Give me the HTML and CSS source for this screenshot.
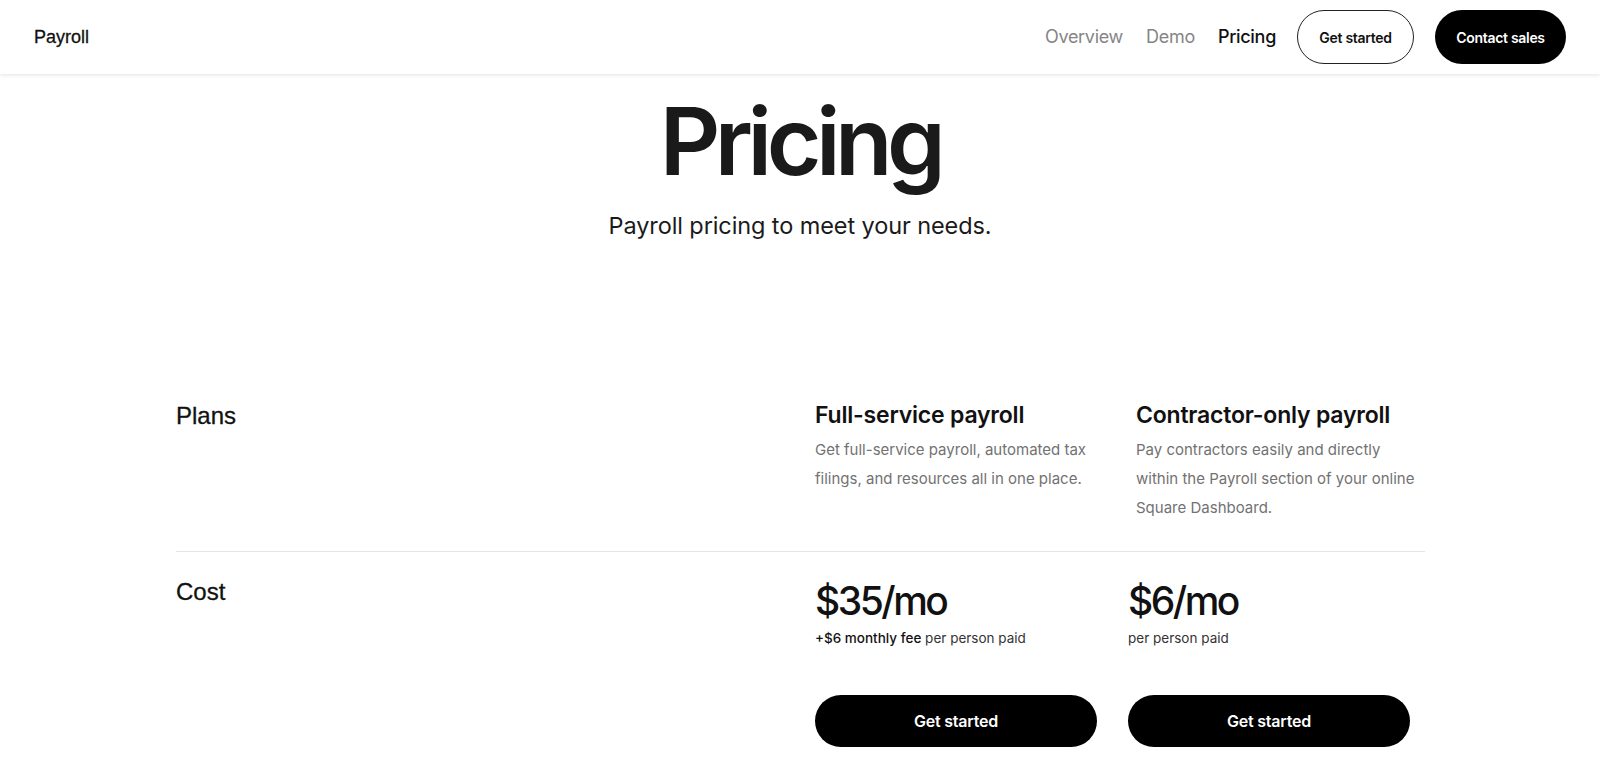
FILE: index.html
```html
<!DOCTYPE html>
<html>
<head>
  <title>Payroll Pricing</title>
  <link rel="stylesheet" href="styles.css">
</head>
<body>

  <header class="topbar">
    <div class="brand">Payroll</div>
    <nav class="nav">
      <a class="nav-link" href="#">Overview</a>
      <a class="nav-link" href="#">Demo</a>
      <a class="nav-link active" href="#">Pricing</a>
      <a class="btn-outline" href="#">Get started</a>
      <a class="btn-dark" href="#">Contact sales</a>
    </nav>
  </header>

  <section class="hero">
    <h1>Pricing</h1>
    <p class="lead">Payroll pricing to meet your needs.</p>
  </section>

  <section class="plans">
    <div class="row row-plans">
      <div class="label">Plans</div>
      <div class="plan">
        <h3>Full-service payroll</h3>
        <p>Get full-service payroll, automated tax filings, and resources all in one place.</p>
      </div>
      <div class="plan plan-shift">
        <h3>Contractor-only payroll</h3>
        <p>Pay contractors easily and directly within the Payroll section of your online Square Dashboard.</p>
      </div>
    </div>

    <div class="row row-cost">
      <div class="label">Cost</div>
      <div class="price">
        <div class="amount">$35/mo</div>
        <div class="note"><b>+$6 monthly fee</b> per person paid</div>
        <a class="btn-wide" href="#">Get started</a>
      </div>
      <div class="price">
        <div class="amount">$6/mo</div>
        <div class="note">per person paid</div>
        <a class="btn-wide" href="#">Get started</a>
      </div>
    </div>
  </section>

</body>
</html>
```
FILE: styles.css
```css
body {
  margin: 0;
  font-family: Inter, "Noto Sans", sans-serif;
  color: #1a1a1a;
  background-color: #fff;
}
a {
  text-decoration: none;
}

/* top bar */
.topbar {
  height: 74px;
  display: flex;
  align-items: center;
  justify-content: space-between;
  padding: 0 34px;
  background-color: #fff;
  box-shadow: 0 1px 4px rgba(0, 0, 0, 0.12);
}
.brand {
  font-family: "Liberation Sans", Arial, sans-serif;
  font-size: 18px;
  color: #111;
  -webkit-text-stroke: 0.3px #111;
}
.nav {
  display: flex;
  align-items: center;
  gap: 21px;
}
.nav-link {
  font-size: 18px;
  color: #858585;
  letter-spacing: -0.3px;
  margin-left: 2px;
  margin-top: -1px;
}
.nav-link.active {
  color: #111;
  font-weight: 500;
}
.btn-outline,
.btn-dark {
  height: 54px;
  box-sizing: border-box;
  display: flex;
  align-items: center;
  justify-content: center;
  border-radius: 27px;
  font-size: 14px;
  font-weight: 600;
  letter-spacing: -0.3px;
}
.btn-outline {
  width: 117px;
  border: 1px solid #222;
  color: #111;
}
.btn-dark {
  width: 131px;
  background-color: #000;
  color: #fff;
}

/* hero */
.hero {
  text-align: center;
}
.hero h1 {
  margin: 20px 0 0;
  font-size: 94px;
  line-height: 1;
  font-weight: 600;
  letter-spacing: -5.5px;
  color: #1a1a1a;
}
.lead {
  margin: 23px 0 0;
  font-size: 23.5px;
  line-height: 1.3;
  color: #1a1a1a;
  letter-spacing: -0.1px;
}

/* plans table */
.plans {
  margin: 158px 175px 0 176px;
}
.row {
  display: grid;
  grid-template-columns: 1fr 282px 282px;
  column-gap: 31px;
  padding-right: 15px;
}
.row-plans {
  padding-bottom: 29px;
  border-bottom: 1px solid #e6e6e6;
}
.row-cost {
  padding-top: 24px;
}
.label {
  font-family: "Liberation Sans", Arial, sans-serif;
  font-size: 24px;
  line-height: 1.3;
  color: #111;
  -webkit-text-stroke: 0.3px #111;
}
.plan h3 {
  margin: 0;
  font-size: 23px;
  line-height: 31px;
  font-weight: 600;
  letter-spacing: -0.2px;
  color: #111;
}
.plan p {
  margin: 4px 0 0;
  font-size: 15px;
  line-height: 29px;
  color: #727272;
}
.plan-shift {
  padding-left: 8px;
  margin-right: -8px;
}
.amount {
  margin-top: 1px;
  font-size: 39px;
  line-height: 48px;
  font-weight: 500;
  letter-spacing: -2.5px;
  color: #111;
}
.note {
  margin-top: 3px;
  font-size: 13.5px;
  line-height: 20px;
  color: #333;
}
.note b {
  font-weight: 500;
  color: #111;
}
.btn-wide {
  margin-top: 47px;
  height: 52px;
  border-radius: 26px;
  background-color: #000;
  color: #fff;
  display: flex;
  align-items: center;
  justify-content: center;
  font-size: 16px;
  font-weight: 600;
  letter-spacing: -0.2px;
}
```
